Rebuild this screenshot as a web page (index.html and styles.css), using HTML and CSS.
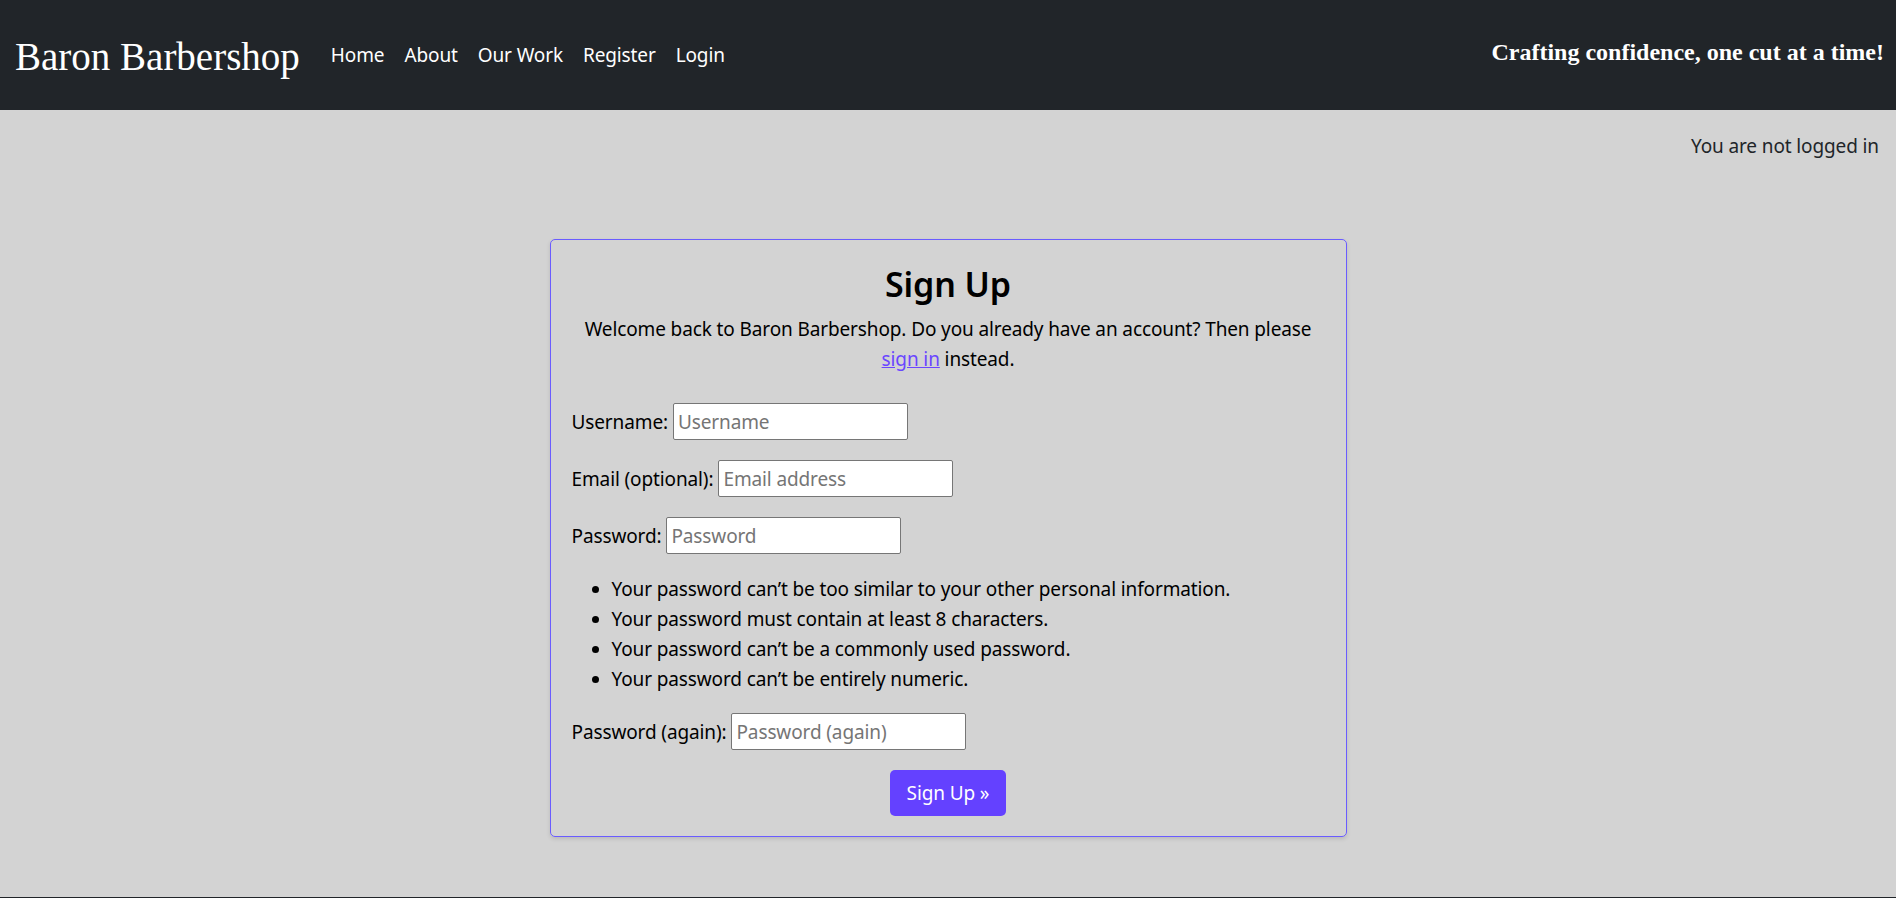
FILE: index.html
```html
<!DOCTYPE html>
<html lang="en">
<head>
<meta charset="utf-8">
<title>Baron Barbershop - Sign Up</title>
<link rel="stylesheet" href="styles.css">
</head>
<body>
<header class="navbar">
  <a class="brand" href="#">Baron Barbershop</a>
  <ul class="nav">
    <li><a class="nav-link" href="#">Home</a></li>
    <li><a class="nav-link" href="#">About</a></li>
    <li><a class="nav-link" href="#">Our Work</a></li>
    <li><a class="nav-link" href="#">Register</a></li>
    <li><a class="nav-link" href="#">Login</a></li>
  </ul>
  <p class="tagline">Crafting confidence, one cut at a time!</p>
</header>
<main class="main">
  <p class="status">You are not logged in</p>
  <section class="card">
    <h2 class="card-title">Sign Up</h2>
    <p class="intro">Welcome back to Baron Barbershop. Do you already have an account? Then please <a class="link" href="#">sign in</a> instead.</p>
    <form class="form">
      <p class="row"><label for="u">Username:</label><input id="u" class="field" type="text" placeholder="Username"></p>
      <p class="row"><label for="e">Email (optional):</label><input id="e" class="field" type="email" placeholder="Email address"></p>
      <p class="row"><label for="p1">Password:</label><input id="p1" class="field" type="password" placeholder="Password"></p>
      <ul class="help">
        <li>Your password can’t be too similar to your other personal information.</li>
        <li>Your password must contain at least 8 characters.</li>
        <li>Your password can’t be a commonly used password.</li>
        <li>Your password can’t be entirely numeric.</li>
      </ul>
      <p class="row"><label for="p2">Password (again):</label><input id="p2" class="field" type="password" placeholder="Password (again)"></p>
      <div class="actions"><button class="btn" type="submit">Sign Up »</button></div>
    </form>
  </section>
</main>
<footer class="footer"></footer>
</body>
</html>
```
FILE: styles.css
```css
* { box-sizing: border-box; }
html, body { margin: 0; padding: 0; }
body {
  background: #d3d3d3;
  color: #212529;
  font-family: "Noto Sans", "Open Sans", sans-serif;
  font-size: 19px;
  letter-spacing: -0.12px;
  line-height: 30px;
}
.navbar {
  height: 110px;
  background: #212529;
  display: flex;
  align-items: center;
  padding: 0 12px 0 15px;
}
.brand {
  font-family: "Liberation Serif", serif;
  font-size: 39px;
  letter-spacing: 0;
  color: #fff;
  text-decoration: none;
  margin-right: 21px;
  position: relative;
  top: 2px;
}
.nav {
  list-style: none;
  display: flex;
  margin: 0;
  padding: 0;
}
.nav-link {
  display: block;
  padding: 0 10px;
  color: #fff;
  text-decoration: none;
  font-size: 19px;
}
.tagline {
  margin: 0 0 0 auto;
  font-family: "Liberation Serif", serif;
  font-weight: bold;
  font-size: 24px;
  letter-spacing: 0;
  color: #fff;
  position: relative;
  top: -3px;
}
.main {
  padding: 21px 17px 60px;
}
.status {
  margin: 0 0 78px;
  text-align: right;
}
.card {
  width: 797px;
  margin: 0 auto;
  border: 1px solid #6a5cff;
  border-radius: 5px;
  box-shadow: 0 2px 4px rgba(0,0,0,.12);
  padding: 20px 21px 20px;
}
.card-title {
  margin: 0 0 6px;
  text-align: center;
  font-size: 34px;
  line-height: 48px;
  font-weight: 600;
  color: #000;
}
.intro {
  margin: 0 0 29px;
  text-align: center;
  color: #000;
}
.link { color: #6a46ff; }
.form { margin: 0; color: #000; }
.row {
  margin: 0 0 20px;
  height: 37px;
  display: flex;
  align-items: center;
}
.row label { margin-right: 5px; }
.field {
  width: 235px;
  height: 37px;
  border: 1px solid #767676;
  border-radius: 2px;
  background: #fff;
  font-family: inherit;
  font-size: 19px;
  letter-spacing: -0.12px;
  padding: 0 4px;
  color: #000;
}
.field::placeholder { color: #757575; }
.help {
  margin: 0 0 19px;
  padding-left: 40px;
}
.actions {
  display: flex;
  justify-content: center;
}
.btn {
  background: #6441ff;
  color: #fff;
  border: 0;
  border-radius: 5px;
  font-family: inherit;
  font-size: 19px;
  letter-spacing: -0.12px;
  line-height: 30px;
  padding: 8px 17px;
  height: 46px;
}
.footer {
  background: #212529;
  height: 60px;
}
```
